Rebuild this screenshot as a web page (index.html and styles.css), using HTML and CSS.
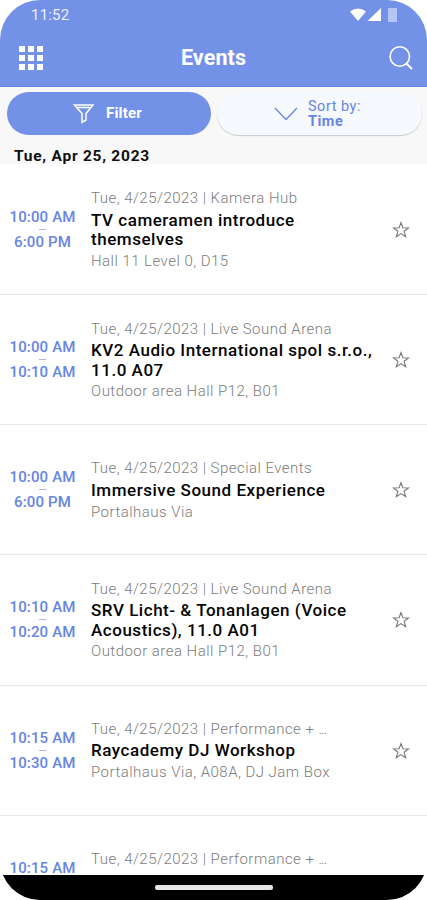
FILE: index.html
```html
<!DOCTYPE html>
<html lang="en">
<head>
<meta charset="utf-8">
<title>Events</title>
<link rel="stylesheet" href="styles.css">
</head>
<body>
<svg class="defs" width="0" height="0"><symbol id="star" viewBox="0 0 18 18"><path d="M9 1.600l1.900 5.200 5.600.1-4.400 3.400 1.600 5.500L9 12.600l-4.700 3.200 1.600-5.500L1.500 6.900l5.600-.1z" fill="none" stroke="#777" stroke-width="1.100"/></symbol></svg>
<div class="phone">
  <header class="top">
    <div class="status"><span>11:52</span>
      <svg width="50" height="16" viewBox="0 0 50 16"><path d="M1 4.500Q9-1.500 17 4.500L9 14z" fill="#fff"/><path d="M32 1v13H18.500z" fill="#fff"/><path d="M39 1h9v14h-9z" fill="#b6c5f4"/></svg>
    </div>
    <div class="bar">
      <svg width="24" height="24" viewBox="0 0 24 24" fill="#fff"><path d="M0 0h6v6H0zM9 0h6v6H9zM18 0h6v6h-6zM0 9h6v6H0zM9 9h6v6H9zM18 9h6v6h-6zM0 18h6v6H0zM9 18h6v6H9zM18 18h6v6h-6z"/></svg>
      <h1>Events</h1>
      <svg width="24" height="24" viewBox="0 0 24 24" fill="none" stroke="#fff"><circle cx="10.800" cy="10.500" r="9.700" stroke-width="1.600"/><path d="M17 17l6 6" stroke-width="2"/></svg>
    </div>
  </header>
  <div class="tools">
    <div class="buttons">
      <div class="btn filter"><svg width="22" height="20" viewBox="0 0 22 20" fill="none" stroke="#fff" stroke-width="1.500"><path d="M1.500 1h18.500l-7 8.500v6.500l-4 2.500v-9zM4 3.500h13"/></svg><b>Filter</b></div>
      <div class="btn sort"><svg width="24" height="14" viewBox="0 0 24 14" fill="none" stroke="#6685e4" stroke-width="1.300"><path d="M1 1l11 11.500L23 1"/></svg><div><p>Sort by:</p><p><b>Time</b></p></div></div>
    </div>
    <h2>Tue, Apr 25, 2023</h2>
  </div>
  <main>
    <article><div class="time"><span>10:00 AM</span><i></i><span>6:00 PM</span></div><div class="info"><p>Tue, 4/25/2023 | Kamera Hub</p><h3>TV cameramen introduce<br>themselves</h3><p>Hall 11 Level 0, D15</p></div><svg class="star"><use href="#star"/></svg></article>
    <article><div class="time"><span>10:00 AM</span><i></i><span>10:10 AM</span></div><div class="info"><p>Tue, 4/25/2023 | Live Sound Arena</p><h3>KV2 Audio International spol s.r.o.,<br>11.0 A07</h3><p>Outdoor area Hall P12, B01</p></div><svg class="star"><use href="#star"/></svg></article>
    <article><div class="time"><span>10:00 AM</span><i></i><span>6:00 PM</span></div><div class="info"><p>Tue, 4/25/2023 | Special Events</p><h3>Immersive Sound Experience</h3><p>Portalhaus Via</p></div><svg class="star"><use href="#star"/></svg></article>
    <article><div class="time"><span>10:10 AM</span><i></i><span>10:20 AM</span></div><div class="info"><p>Tue, 4/25/2023 | Live Sound Arena</p><h3>SRV Licht- &amp; Tonanlagen (Voice<br>Acoustics), 11.0 A01</h3><p>Outdoor area Hall P12, B01</p></div><svg class="star"><use href="#star"/></svg></article>
    <article><div class="time"><span>10:15 AM</span><i></i><span>10:30 AM</span></div><div class="info"><p>Tue, 4/25/2023 | Performance + <span class="dots">...</span></p><h3>Raycademy DJ Workshop</h3><p>Portalhaus Via, A08A, DJ Jam Box</p></div><svg class="star"><use href="#star"/></svg></article>
    <article><div class="time"><span>10:15 AM</span></div><div class="info"><p>Tue, 4/25/2023 | Performance + <span class="dots">...</span></p><h3>Raycademy DJ Workshop</h3></div><svg class="star"><use href="#star"/></svg></article>
  </main>
  <footer><div class="handle"></div></footer>
</div>
</body>
</html>
```
FILE: styles.css
```css
* { box-sizing: border-box; margin: 0; padding: 0; }
html, body { height: 900px; overflow: hidden; background: #fff; }
body { font-family: Roboto, "Liberation Sans", sans-serif; }
.defs { position: absolute; }
.phone { width: 427px; height: 900px; display: flex; flex-direction: column; overflow: hidden; border-radius: 40px; background: #fff; }
.top { height: 87px; flex: none; background: #7391e6; border-bottom: 1px solid #6685e0; color: #fff; }
.status { height: 30px; padding: 0 28px 0 31px; display: flex; align-items: center; justify-content: space-between; font-size: 15px; letter-spacing: .2px; color: #edf1fd; }
.status svg { margin-top: -1px; }
.bar { height: 55px; padding: 0 14px 0 19px; display: flex; align-items: center; justify-content: space-between; }
.bar h1 { font-size: 21.5px; font-weight: 700; line-height: 24px; letter-spacing: .1px; margin-right: 5px; }
.tools { height: 77px; flex: none; background: #f8f8f8; padding: 5px 5px 0 7px; }
.buttons { display: flex; gap: 6px; }
.btn { height: 43px; border-radius: 22px; display: flex; align-items: center; }
.filter { width: 204px; background: #7391e6; color: #fff; padding-left: 66px; gap: 11px; font-size: 15px; letter-spacing: .2px; }
.filter b { margin-top: -1px; }
.sort { width: 205px; background: #f6f9fd; color: #6685e4; padding-left: 57px; gap: 10px; font-size: 14.5px; line-height: 15px; letter-spacing: .5px; box-shadow: 0 1px 1px #ccc; }
.tools h2 { font-size: 15.5px; font-weight: 700; line-height: 18px; letter-spacing: .75px; padding: 12px 0 0 7px; color: #111; }
main { height: 711px; flex: none; overflow: hidden; }
article { height: 130.2px; padding-top: 2px; border-bottom: 1px solid #e8e8e8; display: flex; align-items: center; }
article:first-child { height: 131px; }
.time { width: 85px; flex: none; display: flex; flex-direction: column; align-items: center; color: #6685e4; font-size: 15px; font-weight: 500; line-height: 20px; letter-spacing: .15px; padding-bottom: 2px; }
.time i { width: 7px; height: 1px; margin: 2px 0; background: #a9baf0; }
.info { padding-left: 6px; flex: 1; white-space: nowrap; }
.info p { font-size: 15px; line-height: 22px; letter-spacing: .47px; color: #7c7c7c; font-weight: 300; }
.info p:first-child { margin: -1.6px 0 .6px; }
.info h3 { font-size: 17px; font-weight: 500; line-height: 19.5px; letter-spacing: .53px; color: #050505; padding-top: 1px; }
.dots { letter-spacing: -1px; }
.star { width: 18px; height: 18px; margin: 0 17px 1px 0; flex: none; }
article:last-child { align-items: flex-start; padding-top: 34px; }
article:last-child .time { padding-top: 8px; }
article:last-child h3 { padding-top: 2px; }
article:last-child .star { margin-top: 25px; }
footer { height: 25px; flex: none; background: #000; display: flex; justify-content: center; padding-top: 10px; }
.handle { width: 118px; height: 5px; border-radius: 2px; background: #e6e6e6; }
```
